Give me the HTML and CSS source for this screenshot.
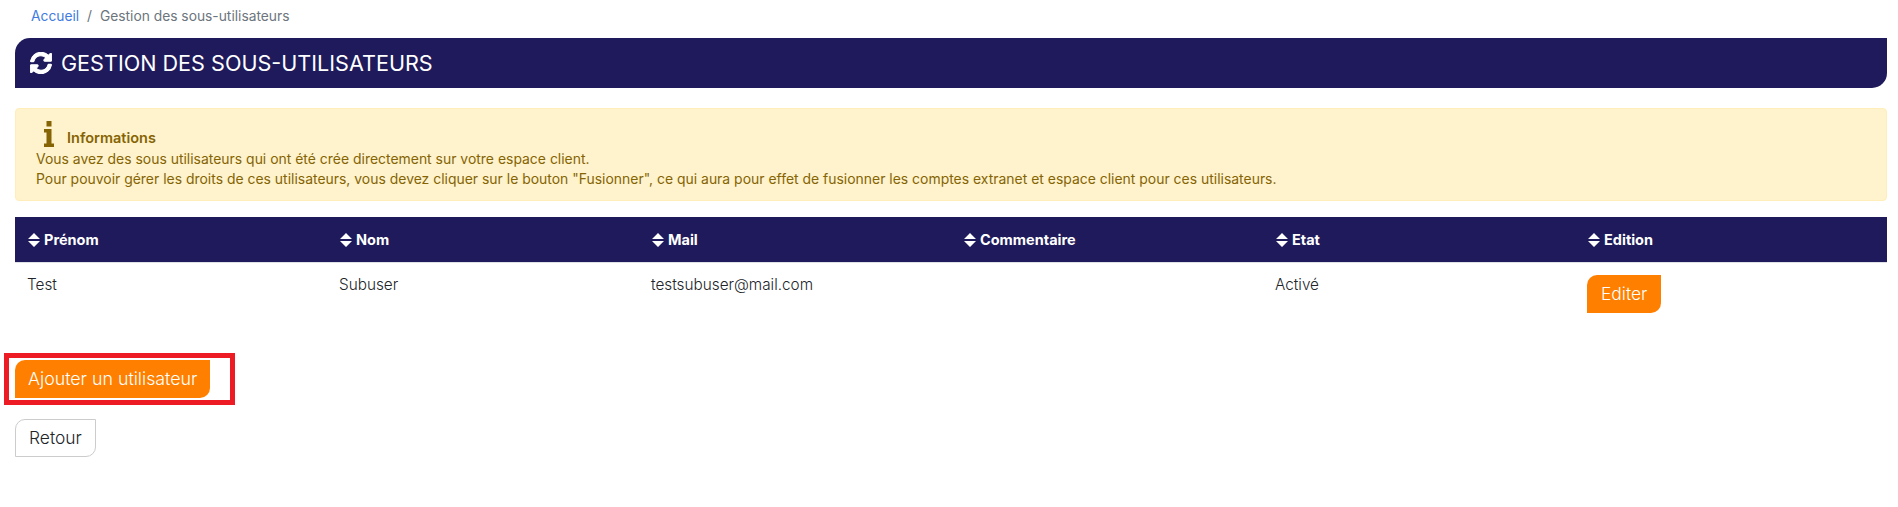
FILE: index.html
```html
<!DOCTYPE html>
<html lang="fr">
<head>
    <meta charset="UTF-8">
    <title>Gestion des sous-utilisateurs</title>
    <link rel="stylesheet" href="styles.css">
</head>
<body>
    <nav class="breadcrumb">
        <a href="#">Accueil</a>
        <span class="breadcrumb-sep">/</span>
        <span>Gestion des sous-utilisateurs</span>
    </nav>

    <h1 class="page-title">
        <svg class="title-icon" viewBox="0 0 512 512"><path d="M370.72 133.28C339.458 104.008 298.888 87.962 255.848 88c-77.458.068-144.328 53.178-162.791 126.85-1.344 5.363-6.122 9.15-11.651 9.15H24.103c-7.498 0-13.194-6.807-11.807-14.176C33.933 94.924 134.813 8 256 8c66.448 0 126.791 26.136 171.315 68.685L463.03 40.97C478.149 25.851 504 36.559 504 57.941V192c0 13.255-10.745 24-24 24H345.941c-21.382 0-32.09-25.851-16.971-40.971l41.75-41.749zM32 296h134.059c21.382 0 32.09 25.851 16.971 40.971l-41.75 41.75c31.262 29.273 71.835 45.319 114.876 45.28 77.418-.07 144.315-53.144 162.787-126.849 1.344-5.363 6.122-9.15 11.651-9.15h57.304c7.498 0 13.194 6.807 11.807 14.176C478.067 417.076 377.187 504 256 504c-66.448 0-126.791-26.136-171.315-68.685L48.97 471.03C33.851 486.149 8 475.441 8 454.059V320c0-13.255 10.745-24 24-24z"/></svg>
        GESTION DES SOUS-UTILISATEURS
    </h1>

    <div class="alert">
        <div class="alert-head">
            <svg class="info-icon" viewBox="0 0 10 26"><path d="M2.5 0h5v5.500h-5zM0 8h7.500v14.500H10V26H0v-3.500h2.500v-11H0z"/></svg>
            <strong>Informations</strong>
        </div>
        <p>Vous avez des sous utilisateurs qui ont été crée directement sur votre espace client.</p>
        <p>Pour pouvoir gérer les droits de ces utilisateurs, vous devez cliquer sur le bouton "Fusionner", ce qui aura pour effet de fusionner les comptes extranet et espace client pour ces utilisateurs.</p>
    </div>

    <table class="users">
        <thead>
            <tr>
                <th><svg class="sort-icon" viewBox="0 0 12 14"><path d="M6 0l6 6H0zM0 8h12l-6 6z"/></svg>Prénom</th>
                <th><svg class="sort-icon" viewBox="0 0 12 14"><path d="M6 0l6 6H0zM0 8h12l-6 6z"/></svg>Nom</th>
                <th><svg class="sort-icon" viewBox="0 0 12 14"><path d="M6 0l6 6H0zM0 8h12l-6 6z"/></svg>Mail</th>
                <th><svg class="sort-icon" viewBox="0 0 12 14"><path d="M6 0l6 6H0zM0 8h12l-6 6z"/></svg>Commentaire</th>
                <th><svg class="sort-icon" viewBox="0 0 12 14"><path d="M6 0l6 6H0zM0 8h12l-6 6z"/></svg>Etat</th>
                <th><svg class="sort-icon" viewBox="0 0 12 14"><path d="M6 0l6 6H0zM0 8h12l-6 6z"/></svg>Edition</th>
            </tr>
        </thead>
        <tbody>
            <tr>
                <td>Test</td>
                <td>Subuser</td>
                <td>testsubuser@mail.com</td>
                <td></td>
                <td>Activé</td>
                <td><a href="#" class="btn btn-orange">Editer</a></td>
            </tr>
        </tbody>
    </table>

    <div class="add-row">
        <a href="#" class="btn btn-orange">Ajouter un utilisateur</a>
        <span class="highlight"></span>
    </div>

    <div class="back-row">
        <a href="#" class="btn btn-back">Retour</a>
    </div>
</body>
</html>
```

FILE: styles.css
```css
* {
    box-sizing: border-box;
}

body {
    margin: 0;
    padding: 0 11px 0 15px;
    font-family: 'Inter', 'Open Sans', sans-serif;
    font-size: 13.95px;
    color: #212529;
    background: #fff;
}

/* Breadcrumb */
.breadcrumb {
    height: 38px;
    padding: 8px 0 0 16px;
    line-height: 16px;
    color: #6c757d;
    font-size: 13.8px;
}

.breadcrumb a {
    color: #3f7be0;
    text-decoration: none;
}

.breadcrumb-sep {
    margin: 0 4px;
}

/* Title bar */
.page-title {
    display: flex;
    align-items: center;
    height: 50px;
    margin: 0 0 20px;
    padding-left: 15px;
    background: #1e1a5b;
    color: #fff;
    font-size: 21.6px;
    font-weight: 400;
    border-radius: 15px 0 15px 0;
}

.title-icon {
    width: 22px;
    height: 22px;
    margin-right: 9px;
    fill: #fff;
    stroke: #fff;
    stroke-width: 24px;
}

/* Alert */
.alert {
    height: 93px;
    margin-bottom: 16px;
    padding: 12px 20px 0;
    background: #fff3cd;
    border: 1px solid #ffeeba;
    border-radius: 4px;
    color: #856404;
}

.alert-head {
    display: flex;
    align-items: flex-end;
    height: 26px;
    margin-bottom: 2px;
    line-height: 18px;
}

.alert-head strong {
    font-size: 14.5px;
    font-weight: 600;
}

.info-icon {
    width: 10px;
    height: 26px;
    margin: 0 13px 0 8px;
    fill: #856404;
}

.alert p {
    margin: 0 0 1px;
    line-height: 19px;
}

/* Table */
.users {
    width: 100%;
    border-collapse: collapse;
    table-layout: fixed;
}

.users th {
    height: 45px;
    padding: 0 12px 0 13px;
    background: #1e1a5b;
    border-bottom: 1px solid #dee2e6;
    color: #fff;
    font-size: 14.5px;
    font-weight: 700;
    text-align: left;
}

.sort-icon {
    width: 12px;
    height: 14px;
    margin-right: 4px;
    vertical-align: -2px;
    fill: #fff;
}

.users td {
    padding: 12px;
    vertical-align: top;
    font-size: 15.3px;
    font-weight: 300;
    line-height: 20px;
}

/* Buttons */
.btn {
    display: inline-block;
    height: 38px;
    padding: 0 13px;
    line-height: 36px;
    font-size: 17.4px;
    font-weight: 300;
    white-space: nowrap;
    text-decoration: none;
    border: 1px solid transparent;
    border-radius: 10px 0 10px 0;
}

.btn-orange {
    background: #ff8000;
    color: #fff;
}

.btn-back {
    border-color: #ccc;
    color: #212529;
}

.add-row {
    position: relative;
    width: 195px;
    margin-top: 35px;
}

.add-row .btn {
    display: block;
    padding: 0 12px;
    font-size: 17.8px;
}

/* Red annotation box */
.highlight {
    position: absolute;
    top: -7px;
    bottom: -7px;
    left: -11px;
    right: -25px;
    border: 5px solid #ed1c24;
}

.back-row {
    margin-top: 21px;
}
```
